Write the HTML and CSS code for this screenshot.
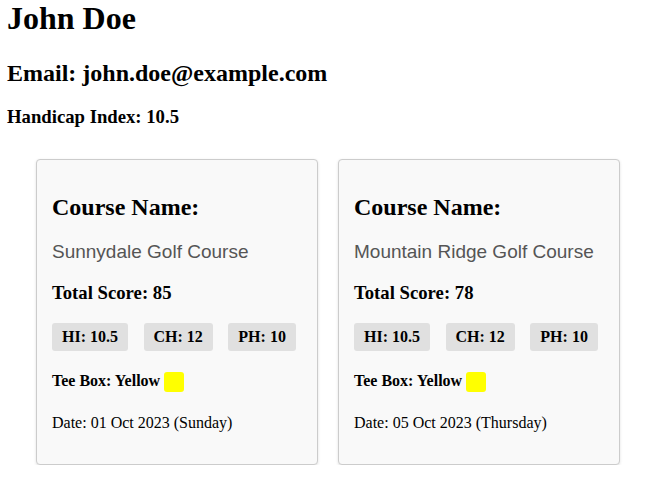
FILE: index.html
```html
<!DOCTYPE html>
<html>
<head>
<meta charset="utf-8">
<link rel="stylesheet" href="styles.css">
</head>
<body>
<header class="profile">
  <h1 class="name">John Doe</h1>
  <h2 class="email">Email: john.doe@example.com</h2>
  <h3 class="hi">Handicap Index: 10.5</h3>
</header>
<section class="rounds">
  <article class="card">
    <h2 class="course-label">Course Name:</h2>
    <p class="course-name">Sunnydale Golf Course</p>
    <p class="score">Total Score: 85</p>
    <div class="badges">
      <span class="badge">HI: 10.5</span>
      <span class="badge">CH: 12</span>
      <span class="badge">PH: 10</span>
    </div>
    <p class="tee">Tee Box: Yellow <span class="swatch swatch-yellow"></span></p>
    <p class="date">Date: 01 Oct 2023 (Sunday)</p>
  </article>
  <article class="card">
    <h2 class="course-label">Course Name:</h2>
    <p class="course-name">Mountain Ridge Golf Course</p>
    <p class="score">Total Score: 78</p>
    <div class="badges">
      <span class="badge">HI: 10.5</span>
      <span class="badge">CH: 12</span>
      <span class="badge">PH: 10</span>
    </div>
    <p class="tee">Tee Box: Yellow <span class="swatch swatch-yellow"></span></p>
    <p class="date">Date: 05 Oct 2023 (Thursday)</p>
  </article>
</section>
</body>
</html>
```

FILE: styles.css
```css
body {
  margin: 0;
  padding: 0 7px;
  font-family: "Liberation Serif", "Times New Roman", serif;
  color: #000;
  background: #fff;
}
.name {
  font-size: 32px;
  margin: 0 0 23px;
}
.email {
  font-size: 24px;
  margin: 0 0 19px;
}
.hi {
  font-size: 18.72px;
  margin: 0;
}
.rounds {
  display: flex;
  gap: 20px;
  padding: 0 0 0 29px;
  margin-top: 31px;
}
.card {
  box-sizing: border-box;
  width: 282px;
  background: #f9f9f9;
  border: 1px solid #ccc;
  border-radius: 4px;
  box-shadow: 0 1px 3px rgba(0,0,0,0.12);
  padding: 16px 15px 32px;
}
.course-label {
  font-size: 24px;
  margin: 18px 0 20px;
}
.course-name {
  font-family: "Liberation Sans", Arial, sans-serif;
  font-size: 19px;
  color: #555;
  margin: 0 0 18.5px;
}
.score {
  font-size: 18.72px;
  font-weight: bold;
  margin: 0 0 19.5px;
}
.badges {
  display: flex;
  gap: 15.5px;
}
.badge {
  background: #e0e0e0;
  border-radius: 3px;
  padding: 5px 10px;
  font-weight: bold;
  font-size: 16px;
}
.tee {
  font-weight: bold;
  font-size: 16px;
  margin: 21px 0 0;
}
.swatch {
  display: inline-block;
  width: 20px;
  height: 20px;
  border-radius: 3px;
  vertical-align: middle;
}
.swatch-yellow {
  background: #ffff00;
}
.date {
  font-size: 16px;
  margin: 22px 0 0;
}
```
